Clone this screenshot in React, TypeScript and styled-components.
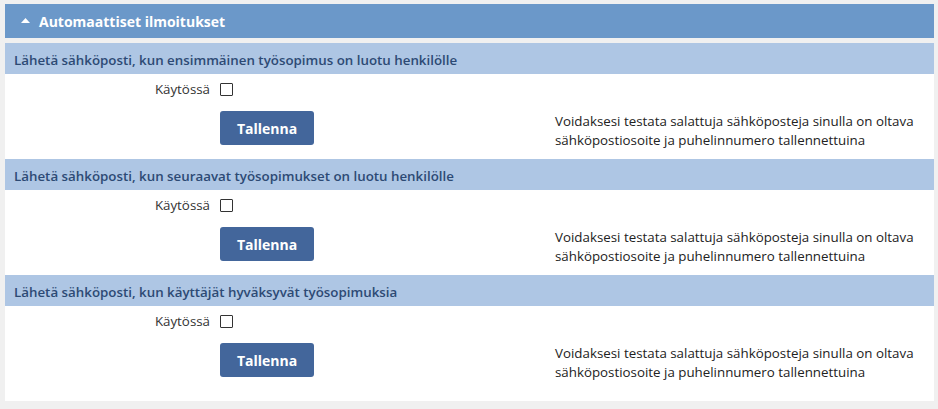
import * as React from 'react';
import styled, { createGlobalStyle } from 'styled-components';

const GlobalStyle = createGlobalStyle`
    body {
        margin: 0;
        background: #f0f0f0;
        font-family: "Open Sans", "DejaVu Sans", sans-serif;
        color: #333;
    }
`

const notifications = [
    { id: 'first', title: 'Lähetä sähköposti, kun ensimmäinen työsopimus on luotu henkilölle' },
    { id: 'next', title: 'Lähetä sähköposti, kun seuraavat työsopimukset on luotu henkilölle' },
    { id: 'accepted', title: 'Lähetä sähköposti, kun käyttäjät hyväksyvät työsopimuksia' },
]

const NOTE = 'Voidaksesi testata salattuja sähköposteja sinulla on oltava sähköpostiosoite ja puhelinnumero tallennettuina'

export default function App() {
    const [enabled, setEnabled] = React.useState<Record<string, boolean>>({})

    return <$Wrapper>
        <GlobalStyle />
        <PanelHeader>
            <svg width="9" height="5" viewBox="0 0 9 5">
                <polygon points="4.5,0 9,5 0,5" fill="#fff" />
            </svg>
            <span>Automaattiset ilmoitukset</span>
        </PanelHeader>
        <Card>
            {notifications.map(item => <section key={item.id}>
                <SectionTitle>{item.title}</SectionTitle>
                <SectionBody>
                    <Label htmlFor={`enabled_${item.id}`}>Käytössä</Label>
                    <CheckBox
                        id={`enabled_${item.id}`}
                        type="checkbox"
                        checked={!!enabled[item.id]}
                        onChange={e => setEnabled({ ...enabled, [item.id]: e.target.checked })}
                    />
                    <span />
                    <SaveButton>Tallenna</SaveButton>
                    <Note>{NOTE}</Note>
                </SectionBody>
            </section>)}
        </Card>
    </$Wrapper>
}

const $Wrapper = styled.div`
    padding: 4px 4px 8px 5px;
`

const PanelHeader = styled.div`
    display: flex;
    align-items: center;
    gap: 9px;
    height: 34px;
    padding-left: 16px;
    background: #6b98c9;
    color: #fff;
    font-size: 14px;
    font-weight: 700;
    margin-bottom: 5px;
    svg {
        display: block;
        margin-top: -1px;
    }
`

const Card = styled.div`
    background: #fff;
    padding-bottom: 10px;
`

const SectionTitle = styled.h3`
    margin: 0;
    height: 31px;
    display: flex;
    align-items: center;
    padding: 2px 0 0 9px;
    box-sizing: border-box;
    background: #aec6e4;
    color: #2d4a74;
    font-size: 13.33px;
    font-weight: 600;
`

const SectionBody = styled.div`
    display: grid;
    grid-template-columns: 205px 94px 1fr;
    grid-template-rows: 22px 34px;
    column-gap: 10px;
    row-gap: 11px;
    padding: 4px 0 14px;
    font-size: 13.33px;
`

const Label = styled.label`
    justify-self: end;
    align-self: center;
    color: #333;
`

const CheckBox = styled.input`
    appearance: none;
    grid-column: 2 / 4;
    align-self: center;
    width: 13px;
    height: 13px;
    margin: 1px 0 0;
    box-sizing: border-box;
    border: 1px solid #333;
    border-radius: 1px;
    background: #fff;
    cursor: pointer;
    &:checked {
        background: #43669b;
        border-color: #43669b;
    }
`

const SaveButton = styled.button`
    width: 94px;
    height: 34px;
    border: none;
    border-radius: 3px;
    background: #43669b;
    color: #fff;
    font-family: inherit;
    font-size: 14px;
    font-weight: 700;
    cursor: pointer;
    &:hover {
        background: #3a5a8c;
    }
`

const Note = styled.p`
    margin: 1px 10px 0 231px;
    line-height: 19px;
    color: #222;
`
